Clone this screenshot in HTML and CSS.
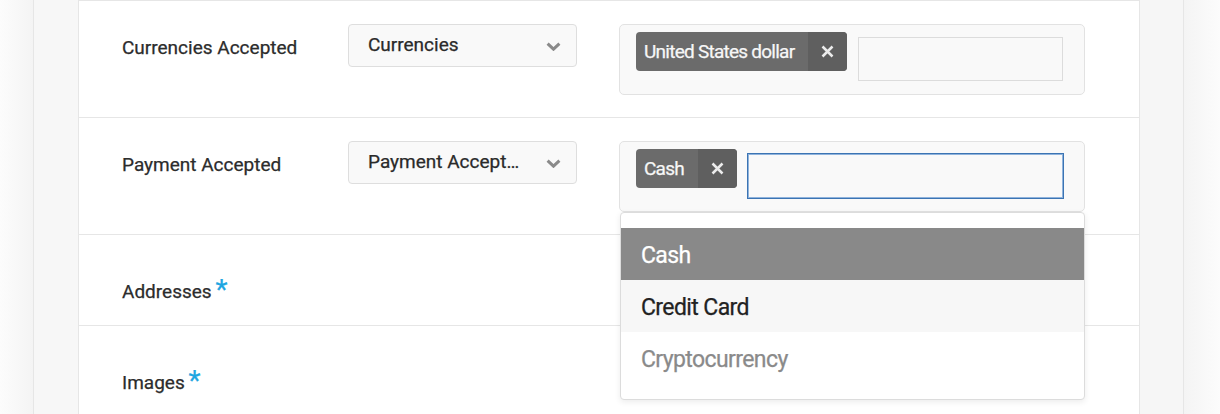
FILE: index.html
```html
<!DOCTYPE html>
<html lang="en">
<head>
<meta charset="utf-8">
<title>Form</title>
<link rel="stylesheet" href="styles.css">
</head>
<body>
<div class="gutter gutter-l"></div>
<div class="side side-l"></div>
<main class="panel">
  <div class="row">
    <div class="label">Currencies Accepted</div>
    <div class="select">
      <span class="select-text">Currencies</span>
      <svg class="chev" width="15" height="9" viewBox="0 0 15 9"><path d="M1.6 1.6 L7.5 7.2 L13.4 1.6" fill="none" stroke="#8a8a8a" stroke-width="3"/></svg>
    </div>
    <div class="tagbox">
      <div class="tag">
        <span class="tag-text">United States dollar</span>
        <span class="tag-x"><svg width="13" height="13" viewBox="0 0 13 13"><path d="M1.5 1.5 L11.5 11.5 M11.5 1.5 L1.5 11.5" stroke="#ececec" stroke-width="2.5"/></svg></span>
      </div>
      <div class="tag-input"></div>
    </div>
  </div>
  <div class="row">
    <div class="label">Payment Accepted</div>
    <div class="select">
      <span class="select-text">Payment Accept…</span>
      <svg class="chev" width="15" height="9" viewBox="0 0 15 9"><path d="M1.6 1.6 L7.5 7.2 L13.4 1.6" fill="none" stroke="#8a8a8a" stroke-width="3"/></svg>
    </div>
    <div class="tagbox">
      <div class="tag">
        <span class="tag-text">Cash</span>
        <span class="tag-x"><svg width="13" height="13" viewBox="0 0 13 13"><path d="M1.5 1.5 L11.5 11.5 M11.5 1.5 L1.5 11.5" stroke="#ececec" stroke-width="2.5"/></svg></span>
      </div>
      <div class="tag-input focused"></div>
      <ul class="dropdown">
        <li class="opt opt-active">Cash</li>
        <li class="opt opt-hover">Credit Card</li>
        <li class="opt opt-muted">Cryptocurrency</li>
      </ul>
    </div>
  </div>
  <div class="row row-plain">
    <div class="label">Addresses <span class="req">*</span></div>
  </div>
  <div class="row row-plain">
    <div class="label">Images <span class="req">*</span></div>
  </div>
</main>
<div class="side side-r"></div>
<div class="gutter gutter-r"></div>
</body>
</html>
```
FILE: styles.css
```css
html, body {
  margin: 0;
  padding: 0;
}
body {
  display: flex;
  height: 414px;
  overflow: hidden;
  font-family: Roboto, "Liberation Sans", sans-serif;
  background: #fafafa;
  -webkit-text-stroke: 0.25px currentColor;
}
.gutter-l {
  width: 33px;
  flex: none;
  background: linear-gradient(90deg, #fcfcfc, #f4f4f4);
  border-right: 1px solid #e6e6e6;
}
.side-l {
  width: 44px;
  flex: none;
  background: #f7f7f7;
  border-right: 1px solid #e6e6e6;
}
.panel {
  width: 1060px;
  flex: none;
  background: #fff;
  border-top: 1px solid #e6e6e6;
  border-right: 1px solid #e6e6e6;
}
.side-r {
  width: 43px;
  flex: none;
  background: #f6f6f6;
  border-right: 1px solid #e6e6e6;
}
.gutter-r {
  flex: 1;
  background: linear-gradient(90deg, #f4f4f4, #fcfcfc);
}
.row {
  display: flex;
  align-items: flex-start;
  padding: 23px 0 22px 43px;
  border-bottom: 1px solid #e6e6e6;
}
.label {
  width: 226px;
  flex: none;
  font-size: 19px;
  line-height: 24px;
  color: #2c2c2c;
  padding-top: 12px;
}
.row-plain {
  padding-top: 0;
  padding-bottom: 21px;
}
.row-plain .label {
  padding-top: 45px;
}
.req {
  color: #1ea6e1;
  font-size: 28px;
  line-height: 0;
  position: relative;
  top: 1px;
  margin-left: -1px;
}
.select {
  width: 229px;
  height: 43px;
  flex: none;
  box-sizing: border-box;
  border: 1px solid #dedede;
  border-radius: 4px;
  background: #f9f9f9;
  display: flex;
  align-items: center;
  justify-content: space-between;
  padding: 0 15px 0 19px;
}
.select-text {
  font-size: 19px;
  color: #2a2a2a;
  line-height: 24px;
  margin-top: -1px;
}
.chev {
  display: block;
  margin-top: 2px;
}
.tagbox {
  margin-left: 42px;
  width: 466px;
  flex: none;
  box-sizing: border-box;
  border: 1px solid #e2e2e2;
  border-radius: 5px;
  background: #f9f9f9;
  padding: 7px 21px 13px 16px;
  display: flex;
  align-items: flex-start;
  gap: 11px;
  position: relative;
}
.tag {
  display: flex;
  height: 39px;
  border-radius: 4px;
  overflow: hidden;
  background: #6b6b6b;
  flex: none;
}
.tag-text {
  font-size: 19px;
  letter-spacing: -0.75px;
  line-height: 39px;
  color: #f7f7f7;
  padding: 0 14px 0 8px;
}
.tag-x {
  width: 39px;
  background: #5f5f5f;
  display: flex;
  align-items: center;
  justify-content: center;
}
.tag-x svg {
  display: block;
}
.tag-input {
  flex: 1;
  height: 44px;
  margin-top: 5px;
  box-sizing: border-box;
  border: 1px solid #dcdcdc;
  background: #f9f9f9;
}
.tag-input.focused {
  border-color: #8fb3dc;
  box-shadow: 0 0 0 1px #3c74b3;
}
.dropdown {
  position: absolute;
  top: calc(100% + 1px);
  left: 0;
  right: -1px;
  margin: 0;
  padding: 15px 0;
  list-style: none;
  background: #fff;
  border: 1px solid #dcdcdc;
  border-radius: 4px;
  box-shadow: 0 2px 6px rgba(0, 0, 0, 0.08);
  z-index: 5;
}
.opt {
  height: 52px;
  line-height: 56px;
  padding-left: 20px;
  font-size: 23px;
  letter-spacing: -0.6px;
  color: #222;
}
.opt-active {
  background: #898989;
  color: #fff;
}
.opt-hover {
  background: #f7f7f7;
}
.opt-muted {
  color: #8a8a8a;
}
```
